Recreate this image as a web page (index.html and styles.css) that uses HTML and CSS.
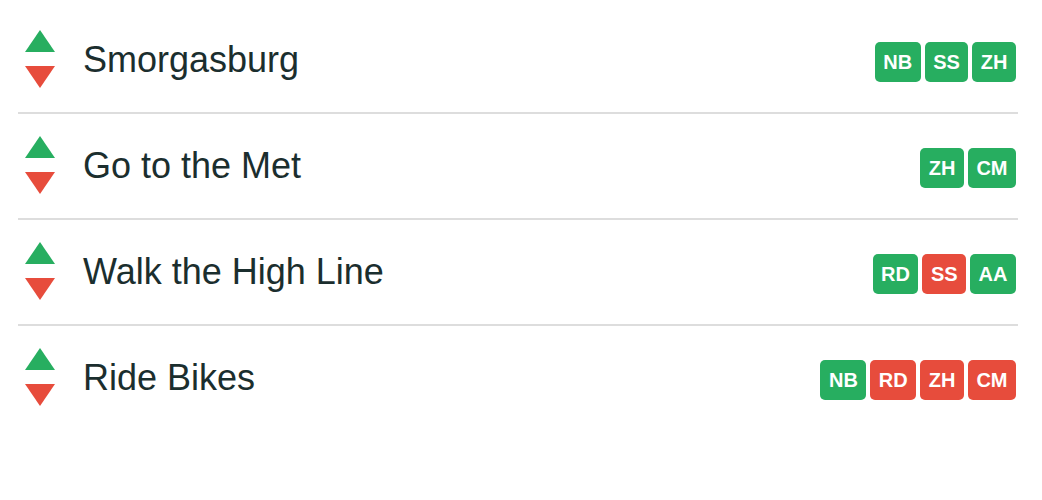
FILE: index.html
```html
<!DOCTYPE html>
<html>
<head>
<meta charset="utf-8">
<link rel="stylesheet" href="styles.css">
</head>
<body>
<div class="list">
  <div class="row">
    <div class="vote"><span class="up"></span><span class="down"></span></div>
    <div class="name">Smorgasburg</div>
    <div class="badges"><span class="badge yes">NB</span><span class="badge yes">SS</span><span class="badge yes">ZH</span></div>
  </div>
  <div class="row">
    <div class="vote"><span class="up"></span><span class="down"></span></div>
    <div class="name">Go to the Met</div>
    <div class="badges"><span class="badge yes">ZH</span><span class="badge yes">CM</span></div>
  </div>
  <div class="row">
    <div class="vote"><span class="up"></span><span class="down"></span></div>
    <div class="name">Walk the High Line</div>
    <div class="badges"><span class="badge yes">RD</span><span class="badge no">SS</span><span class="badge yes">AA</span></div>
  </div>
  <div class="row">
    <div class="vote"><span class="up"></span><span class="down"></span></div>
    <div class="name">Ride Bikes</div>
    <div class="badges"><span class="badge yes">NB</span><span class="badge no">RD</span><span class="badge no">ZH</span><span class="badge no">CM</span></div>
  </div>
</div>
</body>
</html>
```

FILE: styles.css
```css
html, body {
  margin: 0;
  padding: 0;
  background: #ffffff;
}
body {
  font-family: "Liberation Sans", Arial, Helvetica, sans-serif;
  color: #1b2e2e;
}
.list {
  width: 1000px;
  margin: 8px 0 0 18px;
}
.row {
  display: flex;
  align-items: center;
  height: 104px;
  padding: 0 2px 0 7px;
  border-bottom: 2px solid #dddddd;
}
.row:last-child {
  border-bottom: none;
}
.vote {
  display: flex;
  flex-direction: column;
  width: 30px;
  margin-top: -2px;
}
.up {
  width: 0;
  height: 0;
  border-left: 15px solid transparent;
  border-right: 15px solid transparent;
  border-bottom: 22px solid #27ae60;
}
.down {
  width: 0;
  height: 0;
  margin-top: 14px;
  border-left: 15px solid transparent;
  border-right: 15px solid transparent;
  border-top: 22px solid #e74c3c;
}
.name {
  flex: 1;
  margin-left: 28px;
  margin-top: -1px;
  font-size: 36px;
}
.badges {
  display: flex;
  gap: 4px;
  margin-top: 3px;
}
.badge {
  height: 40px;
  line-height: 40px;
  padding: 0 8.5px;
  border-radius: 5px;
  color: #ffffff;
  font-weight: bold;
  font-size: 20px;
}
.badge.yes {
  background: #27ae60;
}
.badge.no {
  background: #e74c3c;
}
```
